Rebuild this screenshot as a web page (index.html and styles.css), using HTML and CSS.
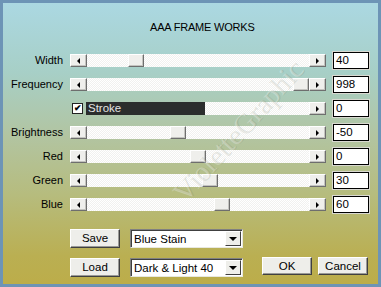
FILE: index.html
```html
<!DOCTYPE html>
<html lang="en">
<head>
  <meta charset="UTF-8">
  <title>AAA Frame Works</title>
  <link rel="stylesheet" href="styles.css">
</head>
<body>
  <div class="dialog">
    <div class="title">AAA FRAME WORKS</div>

    <div class="rows">
      <div class="label">Width</div>
      <div class="scroll">
        <div class="arrow left"></div>
        <div class="track"><div class="thumb" style="margin-left:41px"></div></div>
        <div class="arrow right"></div>
      </div>
      <div class="field">40</div>

      <div class="label">Frequency</div>
      <div class="scroll">
        <div class="arrow left"></div>
        <div class="track"><div class="thumb" style="margin-left:206px"></div></div>
        <div class="arrow right"></div>
      </div>
      <div class="field">998</div>

      <div class="label"></div>
      <div class="scroll stroke">
        <div class="check-cell"><span class="check">&#10004;</span></div>
        <div class="stroke-bar">Stroke</div>
        <div class="track"></div>
        <div class="arrow right"></div>
      </div>
      <div class="field">0</div>

      <div class="label">Brightness</div>
      <div class="scroll">
        <div class="arrow left"></div>
        <div class="track"><div class="thumb" style="margin-left:83px"></div></div>
        <div class="arrow right"></div>
      </div>
      <div class="field">-50</div>

      <div class="label">Red</div>
      <div class="scroll">
        <div class="arrow left"></div>
        <div class="track"><div class="thumb" style="margin-left:103px"></div></div>
        <div class="arrow right"></div>
      </div>
      <div class="field">0</div>

      <div class="label">Green</div>
      <div class="scroll">
        <div class="arrow left"></div>
        <div class="track"><div class="thumb" style="margin-left:115px"></div></div>
        <div class="arrow right"></div>
      </div>
      <div class="field">30</div>

      <div class="label">Blue</div>
      <div class="scroll">
        <div class="arrow left"></div>
        <div class="track"><div class="thumb" style="margin-left:127px"></div></div>
        <div class="arrow right"></div>
      </div>
      <div class="field">60</div>
    </div>

    <div class="actions">
      <div class="btn">Save</div>
      <div class="combo"><span class="combo-text">Blue Stain</span><span class="combo-btn"></span></div>
      <div></div>
      <div></div>

      <div class="btn">Load</div>
      <div class="combo"><span class="combo-text">Dark &amp; Light 40</span><span class="combo-btn"></span></div>
      <div class="btn ok">OK</div>
      <div class="btn ok">Cancel</div>
    </div>

    <div class="watermark">VioletteGraphic</div>
  </div>
</body>
</html>
```

FILE: styles.css
```css
* { margin: 0; padding: 0; box-sizing: border-box; }

body {
  background: #6d94b6;
  font-family: 'Liberation Sans', Arial, sans-serif;
  font-size: 11px;
  color: #000;
}

.dialog {
  position: relative;
  width: 381px; height: 287px;
  border: 3px solid #6d94b6;
  background: linear-gradient(180deg, #abd8e2 0%, #a7cfc6 25%, #b2c4a0 48%, #b6bc7e 68%, #baaf52 90%, #bcad4a 100%);
  overflow: hidden;
}

.title {
  margin-top: 18px;
  padding-left: 147px;
  line-height: 13px;
  font-size: 11px;
  letter-spacing: -0.2px;
}

/* slider rows */
.rows {
  display: grid;
  grid-template-columns: 60px 256px 36px;
  grid-auto-rows: 17px;
  column-gap: 7px; row-gap: 7px;
  margin-top: 18px;
  align-items: center;
}
.label { text-align: right; line-height: 13px; }

.scroll { display: flex; height: 13px; }
.track {
  flex: 1; display: flex;
  background: repeating-conic-gradient(#ffffff 0 25%, #f1f1ef 0 50%) 0 0 / 2px 2px;
}
.arrow, .thumb {
  width: 17px; height: 13px;
  background: #efefec;
  border-top: 1px solid #fff; border-left: 1px solid #fff;
  border-right: 1px solid #6e6e6e; border-bottom: 1px solid #6e6e6e;
  box-shadow: inset -1px -1px #c4c4c0;
  display: flex; align-items: center; justify-content: center;
  flex-shrink: 0;
}
.thumb { width: 16px; }
.arrow::before {
  content: ""; width: 0; height: 0;
  border-top: 3px solid transparent; border-bottom: 3px solid transparent;
}
.arrow.left::before { border-right: 3px solid #000; }
.arrow.right::before { border-left: 3px solid #000; }

.stroke .check-cell { width: 16px; display: flex; align-items: center; }
.check {
  width: 11px; height: 11px; margin-left: 2px;
  background: #fff; border: 1px solid #222;
  font-size: 9px; line-height: 9px; text-align: center; font-weight: bold;
}
.stroke-bar {
  width: 119px; background: #2b2d2d; color: #e4e4e4;
  padding-left: 2px; line-height: 13px; font-size: 11.5px;
}

.field {
  height: 17px; background: #fff;
  border: 1px solid #000; box-shadow: 0 0 0 1px #d8d8d0;
  padding-left: 2px; line-height: 15px; font-size: 11.5px;
}

/* bottom buttons */
.actions {
  display: grid;
  grid-template-columns: 60px 132px 56px 50px;
  grid-auto-rows: 19px;
  row-gap: 10px;
  margin-top: 16px; padding-left: 67px;
}
.btn {
  width: 50px;
  background: #eeeeea;
  border-top: 1px solid #fff; border-left: 1px solid #fff;
  border-right: 1px solid #404040; border-bottom: 1px solid #404040;
  box-shadow: inset -1px -1px #9a9a96;
  text-align: center; line-height: 17px; font-size: 11.5px;
}
.btn.ok { height: 18px; margin-top: -1px; line-height: 16px; }
.combo {
  width: 113px;
  display: flex; align-items: center;
  background: #fff;
  border-top: 1px solid #808080; border-left: 1px solid #808080;
  border-right: 1px solid #e8e8e0; border-bottom: 1px solid #e8e8e0;
  box-shadow: inset 1px 1px #404040;
  padding: 1px 1px 1px 3px;
}
.combo-text { flex: 1; font-size: 11.5px; }
.combo-btn {
  width: 16px; height: 15px;
  background: #eeeeea;
  border-top: 1px solid #fff; border-left: 1px solid #fff;
  border-right: 1px solid #404040; border-bottom: 1px solid #404040;
  display: flex; align-items: center; justify-content: center;
}
.combo-btn::before {
  content: ""; width: 0; height: 0;
  border-left: 4px solid transparent; border-right: 4px solid transparent;
  border-top: 4px solid #000;
}

.watermark {
  position: absolute; left: 146px; top: 112px;
  transform: rotate(-48deg);
  font-family: 'Liberation Serif', serif; font-size: 28px;
  color: rgba(255, 255, 255, 0.28);
  text-shadow: 1px 1px 0 rgba(120, 130, 110, 0.2);
  pointer-events: none;
}
```
